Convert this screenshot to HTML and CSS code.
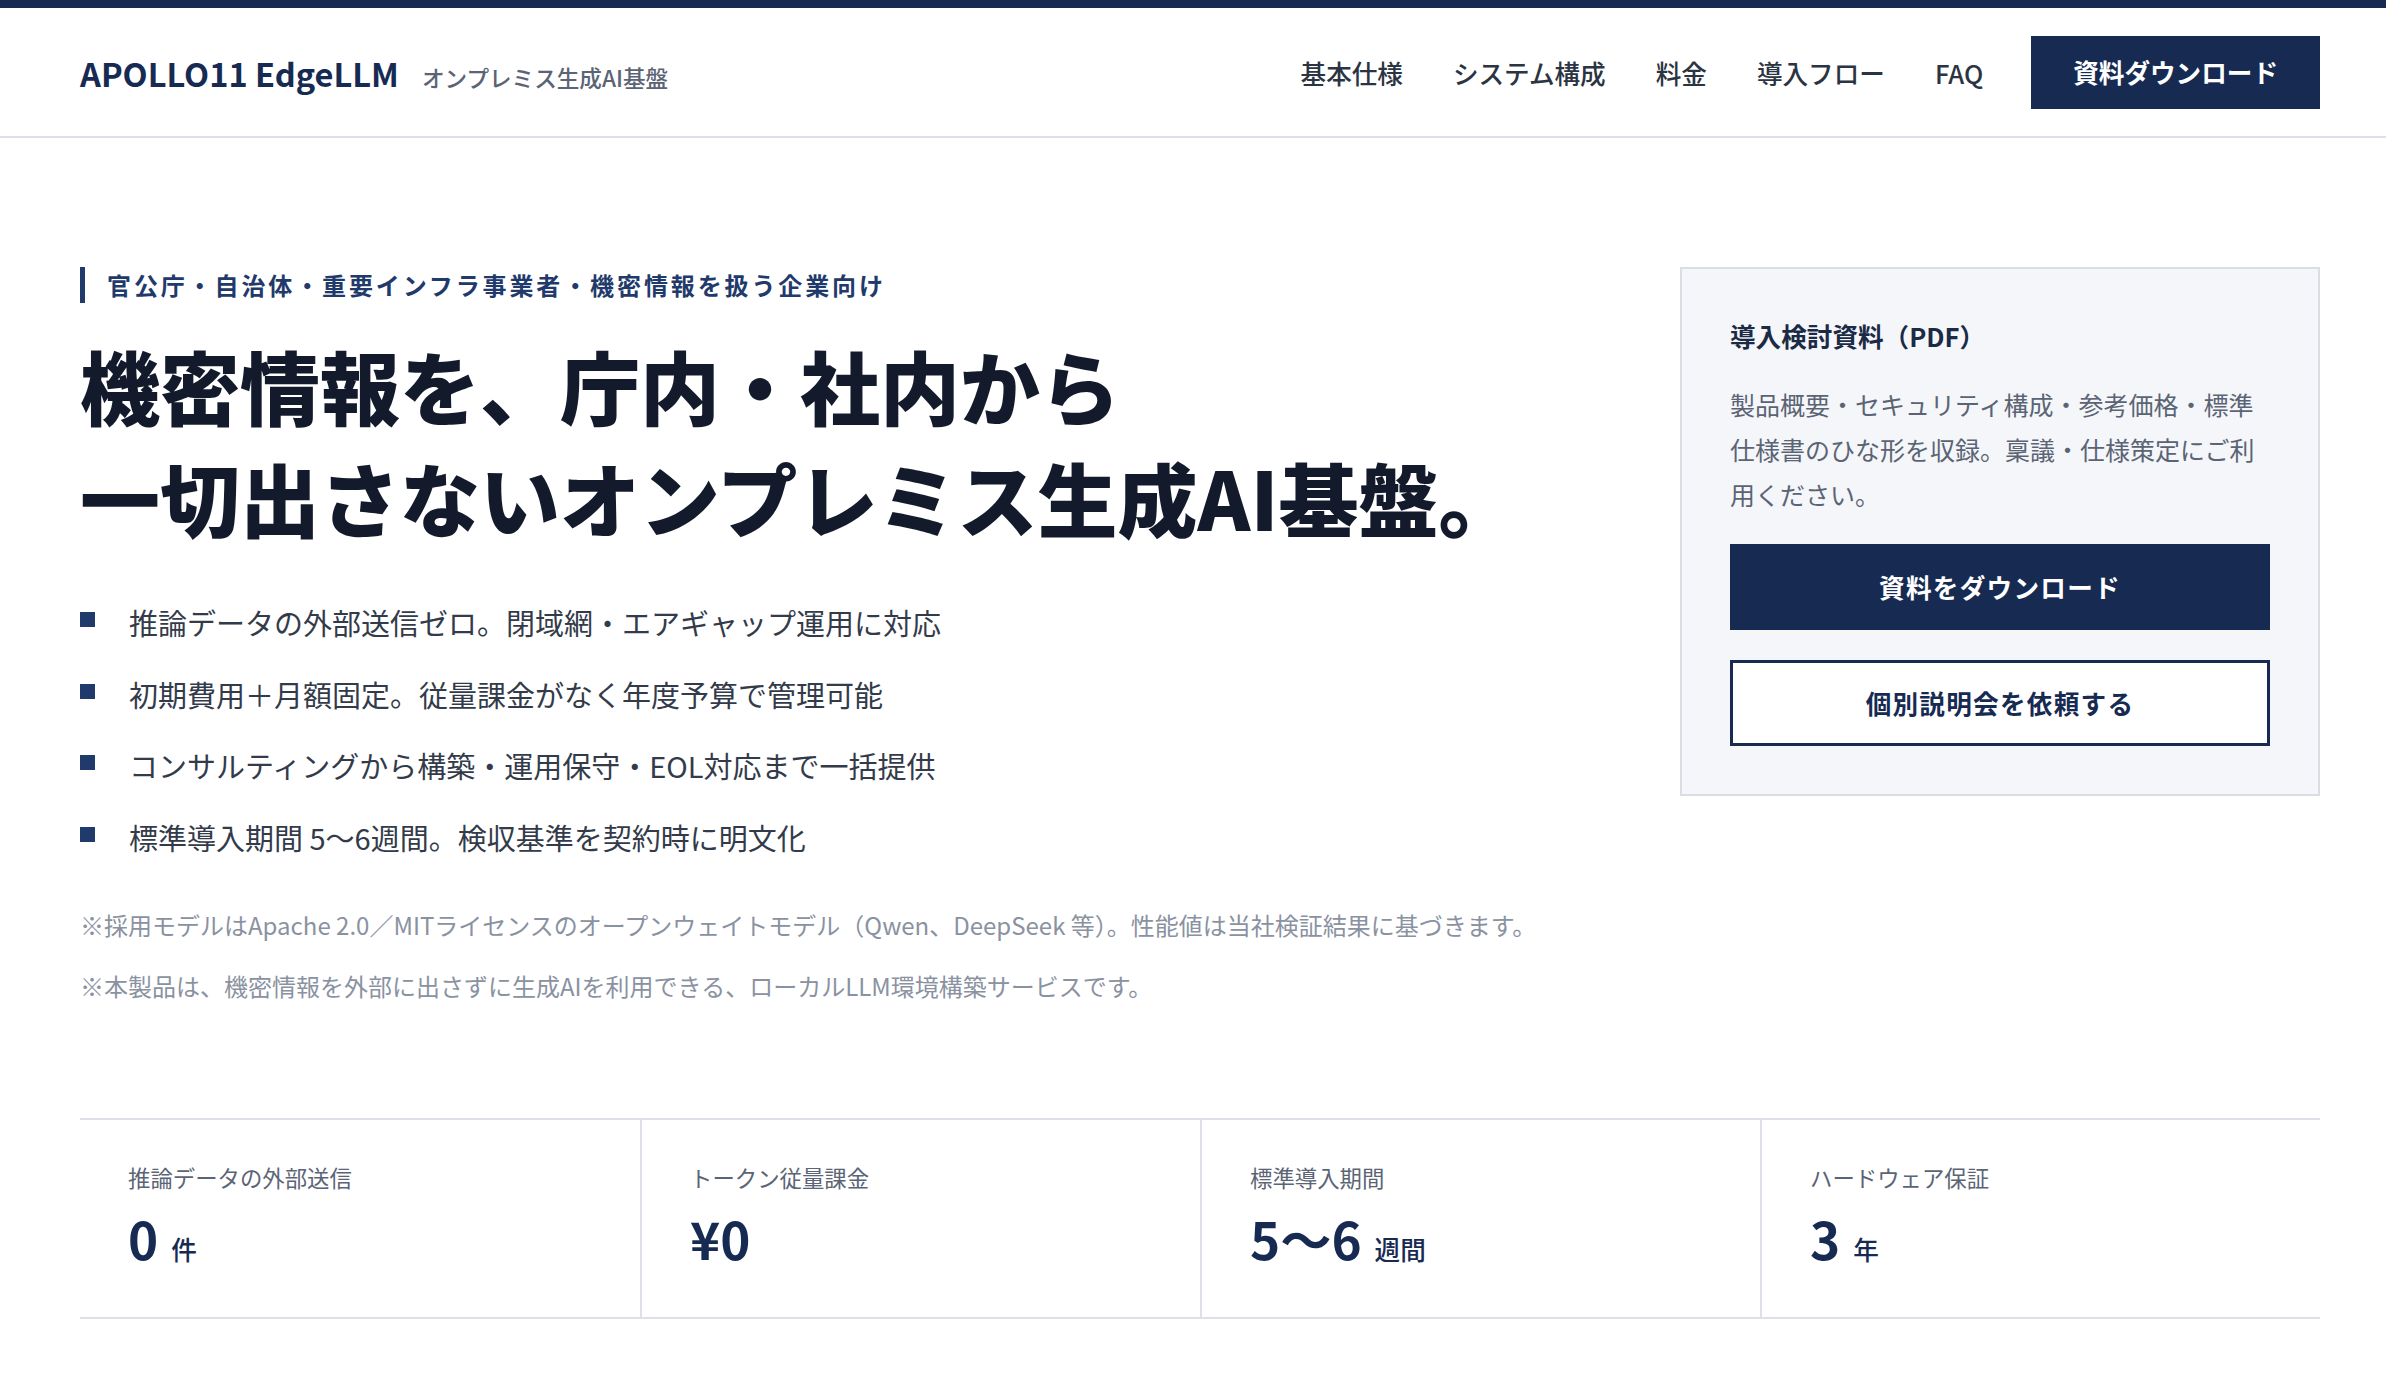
FILE: index.html
```html
<!DOCTYPE html>
<html lang="ja">

<head>
    <meta charset="utf-8">
    <title>APOLLO11 EdgeLLM | オンプレミス生成AI基盤</title>
    <link rel="stylesheet" href="styles.css">
</head>

<body>
    <div class="topline"></div>

    <header class="site-header">
        <div class="container header-inner">
            <a class="brand" href="#">
                <span class="brand-name">APOLLO11 EdgeLLM</span>
                <span class="brand-sub">オンプレミス生成AI基盤</span>
            </a>
            <nav class="global-nav">
                <ul class="nav-list">
                    <li><a href="#spec">基本仕様</a></li>
                    <li><a href="#system">システム構成</a></li>
                    <li><a href="#price">料金</a></li>
                    <li><a href="#flow">導入フロー</a></li>
                    <li><a href="#faq">FAQ</a></li>
                </ul>
                <a class="btn btn-primary nav-cta" href="#download">資料ダウンロード</a>
            </nav>
        </div>
    </header>

    <main>
        <section class="hero">
            <div class="container hero-grid">
                <div class="hero-main">
                    <p class="eyebrow">官公庁・自治体・重要インフラ事業者・機密情報を扱う企業向け</p>
                    <h1 class="hero-title">機密情報を、庁内・社内から<br>一切出さないオンプレミス生成AI基盤。</h1>
                    <ul class="points">
                        <li>推論データの外部送信ゼロ。閉域網・エアギャップ運用に対応</li>
                        <li>初期費用＋月額固定。従量課金がなく年度予算で管理可能</li>
                        <li>コンサルティングから構築・運用保守・EOL対応まで一括提供</li>
                        <li>標準導入期間 5〜6週間。検収基準を契約時に明文化</li>
                    </ul>
                    <div class="notes">
                        <p>※採用モデルはApache 2.0／MITライセンスのオープンウェイトモデル（Qwen、DeepSeek 等）。性能値は当社検証結果に基づきます。</p>
                        <p>※本製品は、機密情報を外部に出さずに生成AIを利用できる、ローカルLLM環境構築サービスです。</p>
                    </div>
                </div>

                <aside class="doc-card" id="download">
                    <h2 class="doc-title">導入検討資料（PDF）</h2>
                    <p class="doc-text">製品概要・セキュリティ構成・参考価格・標準仕様書のひな形を収録。稟議・仕様策定にご利用ください。</p>
                    <div class="doc-actions">
                        <a class="btn btn-primary" href="#">資料をダウンロード</a>
                        <a class="btn btn-outline" href="#">個別説明会を依頼する</a>
                    </div>
                </aside>
            </div>
        </section>

        <section class="stats">
            <div class="container">
                <div class="stats-grid">
                    <div class="stat">
                        <p class="stat-label">推論データの外部送信</p>
                        <p class="stat-value">0<span class="stat-unit">件</span></p>
                    </div>
                    <div class="stat">
                        <p class="stat-label">トークン従量課金</p>
                        <p class="stat-value">¥0</p>
                    </div>
                    <div class="stat">
                        <p class="stat-label">標準導入期間</p>
                        <p class="stat-value">5〜6<span class="stat-unit">週間</span></p>
                    </div>
                    <div class="stat">
                        <p class="stat-label">ハードウェア保証</p>
                        <p class="stat-value">3<span class="stat-unit">年</span></p>
                    </div>
                </div>
            </div>
        </section>
    </main>
</body>

</html>
```

FILE: styles.css
```css
body {
    margin: 0;
    font-family: "Noto Sans CJK JP", "Noto Sans", sans-serif;
    color: #2b3442;
    background-color: #fff;
}

a {
    text-decoration: none;
    color: inherit;
}

p,
h1,
h2,
ul {
    margin: 0;
}

.container {
    max-width: 2240px;
    margin: 0 66px 0 80px;
}

.topline {
    height: 8px;
    background-color: #172b52;
}

/* header */
.site-header {
    height: 128px;
    border-bottom: 2px solid #dce0e6;
}

.header-inner {
    display: flex;
    align-items: center;
    justify-content: space-between;
    height: 100%;
}

.brand {
    display: flex;
    align-items: baseline;
    gap: 23px;
}

.brand-name {
    font-size: 32.6px;
    font-weight: 700;
    color: #172b52;
}

.brand-sub {
    font-size: 22.6px;
    font-weight: 500;
    color: #5b6475;
}

.global-nav {
    display: flex;
    align-items: center;
    gap: 48px;
}

.nav-list {
    display: flex;
    gap: 50px;
    padding: 0;
    list-style: none;
    font-size: 25.6px;
    font-weight: 500;
    color: #2b3442;
}

.btn {
    display: flex;
    align-items: center;
    justify-content: center;
    font-size: 25.6px;
    font-weight: 700;
    line-height: 1.5;
    box-sizing: border-box;
}

.btn-primary {
    background-color: #172b52;
    color: #fff;
}

.btn-outline {
    background-color: #fff;
    color: #172b52;
    border: 3px solid #172b52;
}

.nav-cta {
    height: 73px;
    padding: 0 42px;
}

/* hero */
.hero {
    padding: 129px 0 111px;
}

.hero-grid {
    display: grid;
    grid-template-columns: 1fr 640px;
    gap: 80px;
    align-items: start;
}

.eyebrow {
    font-size: 24px;
    line-height: 1.5;
    font-weight: 700;
    letter-spacing: 0.12em;
    color: #1f3a6b;
    border-left: 5px solid #1f3a6b;
    padding-left: 22px;
}

.hero-title {
    margin-top: 25px;
    font-size: 80px;
    line-height: 1.4;
    font-weight: 900;
    color: #121a2b;
}

.points {
    margin-top: 45px;
    padding: 0;
    list-style: none;
}

.points li {
    display: flex;
    gap: 34px;
    font-size: 29px;
    line-height: 1.78;
    color: #333b4a;
    margin-bottom: 20px;
}

.points li:last-child {
    margin-bottom: 0;
}

.points li::before {
    content: "";
    flex-shrink: 0;
    width: 15px;
    height: 15px;
    margin-top: 15px;
    background-color: #1f3a6b;
}

.notes {
    margin-top: 42px;
    display: flex;
    flex-direction: column;
    gap: 20px;
}

.notes p {
    font-size: 24px;
    line-height: 1.7;
    color: #8a92a1;
}

/* document card */
.doc-card {
    background-color: #f4f6f9;
    border: 2px solid #d9dee5;
    padding: 48px;
}

.doc-title {
    font-size: 25.6px;
    line-height: 1.5;
    font-weight: 700;
    color: #1b2a45;
}

.doc-text {
    margin-top: 27px;
    font-size: 25px;
    line-height: 1.8;
    color: #5b6475;
}

.doc-actions {
    margin-top: 27px;
    display: flex;
    flex-direction: column;
    gap: 30px;
}

.doc-actions .btn {
    height: 86px;
    letter-spacing: 0.05em;
}

/* stats */
.stats-grid {
    display: grid;
    grid-template-columns: repeat(4, 1fr);
    border-top: 2px solid #dde1e7;
    border-bottom: 2px solid #dde1e7;
}

.stat {
    padding: 40px 48px 48px;
    border-left: 2px solid #dde1e7;
}

.stat:first-child {
    border-left: none;
}

.stat-label {
    font-size: 22.4px;
    line-height: 1.6;
    color: #5b6475;
}

.stat-value {
    margin-top: 12px;
    font-size: 51.2px;
    line-height: 1.2;
    font-weight: 700;
    color: #172b52;
}

.stat-unit {
    margin-left: 13px;
    font-size: 25.6px;
    font-weight: 500;
}
```
